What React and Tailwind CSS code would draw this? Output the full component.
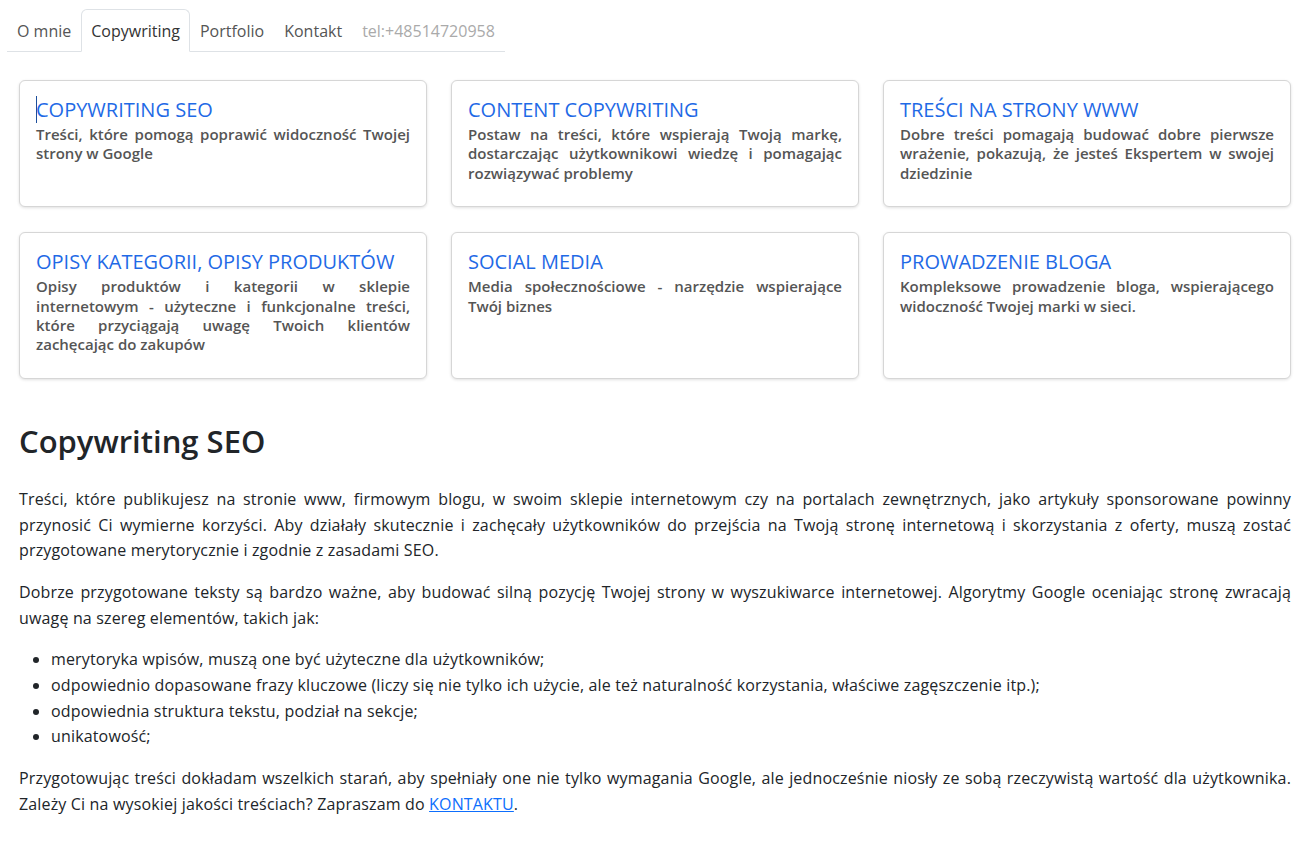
import React from "react";

const tabs = [
  { label: "O mnie" },
  { label: "Copywriting", active: true },
  { label: "Portfolio" },
  { label: "Kontakt" },
  { label: "tel:+48514720958", muted: true },
];

const services = [
  {
    title: "COPYWRITING SEO",
    text: "Treści, które pomogą poprawić widoczność Twojej strony w Google",
    caret: true,
  },
  {
    title: "CONTENT COPYWRITING",
    text: "Postaw na treści, które wspierają Twoją markę, dostarczając użytkownikowi wiedzę i pomagając rozwiązywać problemy",
  },
  {
    title: "TREŚCI NA STRONY WWW",
    text: "Dobre treści pomagają budować dobre pierwsze wrażenie, pokazują, że jesteś Ekspertem w swojej dziedzinie",
  },
  {
    title: "OPISY KATEGORII, OPISY PRODUKTÓW",
    text: "Opisy produktów i kategorii w sklepie internetowym - użyteczne i funkcjonalne treści, które przyciągają uwagę Twoich klientów zachęcając do zakupów",
  },
  {
    title: "SOCIAL MEDIA",
    text: "Media społecznościowe - narzędzie wspierające Twój biznes",
  },
  {
    title: "PROWADZENIE BLOGA",
    text: "Kompleksowe prowadzenie bloga, wspierającego widoczność Twojej marki w sieci.",
  },
];

const bullets = [
  "merytoryka wpisów, muszą one być użyteczne dla użytkowników;",
  "odpowiednio dopasowane frazy kluczowe (liczy się nie tylko ich użycie, ale też naturalność korzystania, właściwe zagęszczenie itp.);",
  "odpowiednia struktura tekstu, podział na sekcje;",
  "unikatowość;",
];

function ServiceCard({ title, text, caret }) {
  return (
    <div className="rounded-md border border-[#d6d6d6] bg-white px-4 pt-[17px] pb-[23px] shadow-[0_1px_3px_rgba(0,0,0,0.12)]">
      <h3 className="relative text-[20px] leading-[24px] text-[#1f6ae6]">
        {/* text caret left in the screenshot */}
        {caret && <span className="absolute left-0 top-[-2px] h-[27px] w-px bg-[#1d4f9c]" />}
        {title}
      </h3>
      <p className="mt-[3px] text-justify text-[15px] font-[560] leading-[19.4px] text-[#555]">{text}</p>
    </div>
  );
}

export default function App() {
  return (
    <div className="min-h-[860px] bg-white font-['Open_Sans',sans-serif] text-[#212529]">
      {/* nav tabs */}
      <nav className="pl-[7px] pt-[9px]">
        <ul className="flex w-[498px] border-b border-[#dee2e6]">
          {tabs.map((t) => (
            <li
              key={t.label}
              className={`-mb-px flex h-[43px] items-center rounded-t-md border px-[9px] text-[16px] ${
                t.active
                  ? "border-[#dee2e6] border-b-white bg-white text-[#333]"
                  : t.muted
                  ? "border-transparent text-[#aaa]"
                  : "border-transparent text-[#555]"
              }`}
            >
              {t.label}
            </li>
          ))}
        </ul>
      </nav>

      <main className="px-[19px] pt-[28px]">
        <div className="grid grid-cols-3 gap-x-6 gap-y-[25px]">
          {services.map((s) => (
            <ServiceCard key={s.title} {...s} />
          ))}
        </div>

        <h2 className="mt-[43px] mb-[27px] text-[31px] font-semibold leading-[38px]">Copywriting SEO</h2>

        <div className="text-justify text-[16px] leading-[25.7px] tracking-[0.16px]">
          <p className="mb-4">
            Treści, które publikujesz na stronie www, firmowym blogu, w swoim sklepie internetowym czy na portalach
            zewnętrznych, jako artykuły sponsorowane powinny przynosić Ci wymierne korzyści. Aby działały skutecznie i
            zachęcały użytkowników do przejścia na Twoją stronę internetową i skorzystania z oferty, muszą zostać
            przygotowane merytorycznie i zgodnie z zasadami SEO.
          </p>
          <p className="mb-4">
            Dobrze przygotowane teksty są bardzo ważne, aby budować silną pozycję Twojej strony w wyszukiwarce
            internetowej. Algorytmy Google oceniając stronę zwracają uwagę na szereg elementów, takich jak:
          </p>
          <ul className="mb-4 list-disc pl-8">
            {bullets.map((b) => (
              <li key={b}>{b}</li>
            ))}
          </ul>
          <p>
            Przygotowując treści dokładam wszelkich starań, aby spełniały one nie tylko wymagania Google, ale
            jednocześnie niosły ze sobą rzeczywistą wartość dla użytkownika. Zależy Ci na wysokiej jakości treściach?
            Zapraszam do{" "}
            <a href="#" className="text-[#0d6efd] underline">
              KONTAKTU
            </a>
            .
          </p>
        </div>
      </main>
    </div>
  );
}
